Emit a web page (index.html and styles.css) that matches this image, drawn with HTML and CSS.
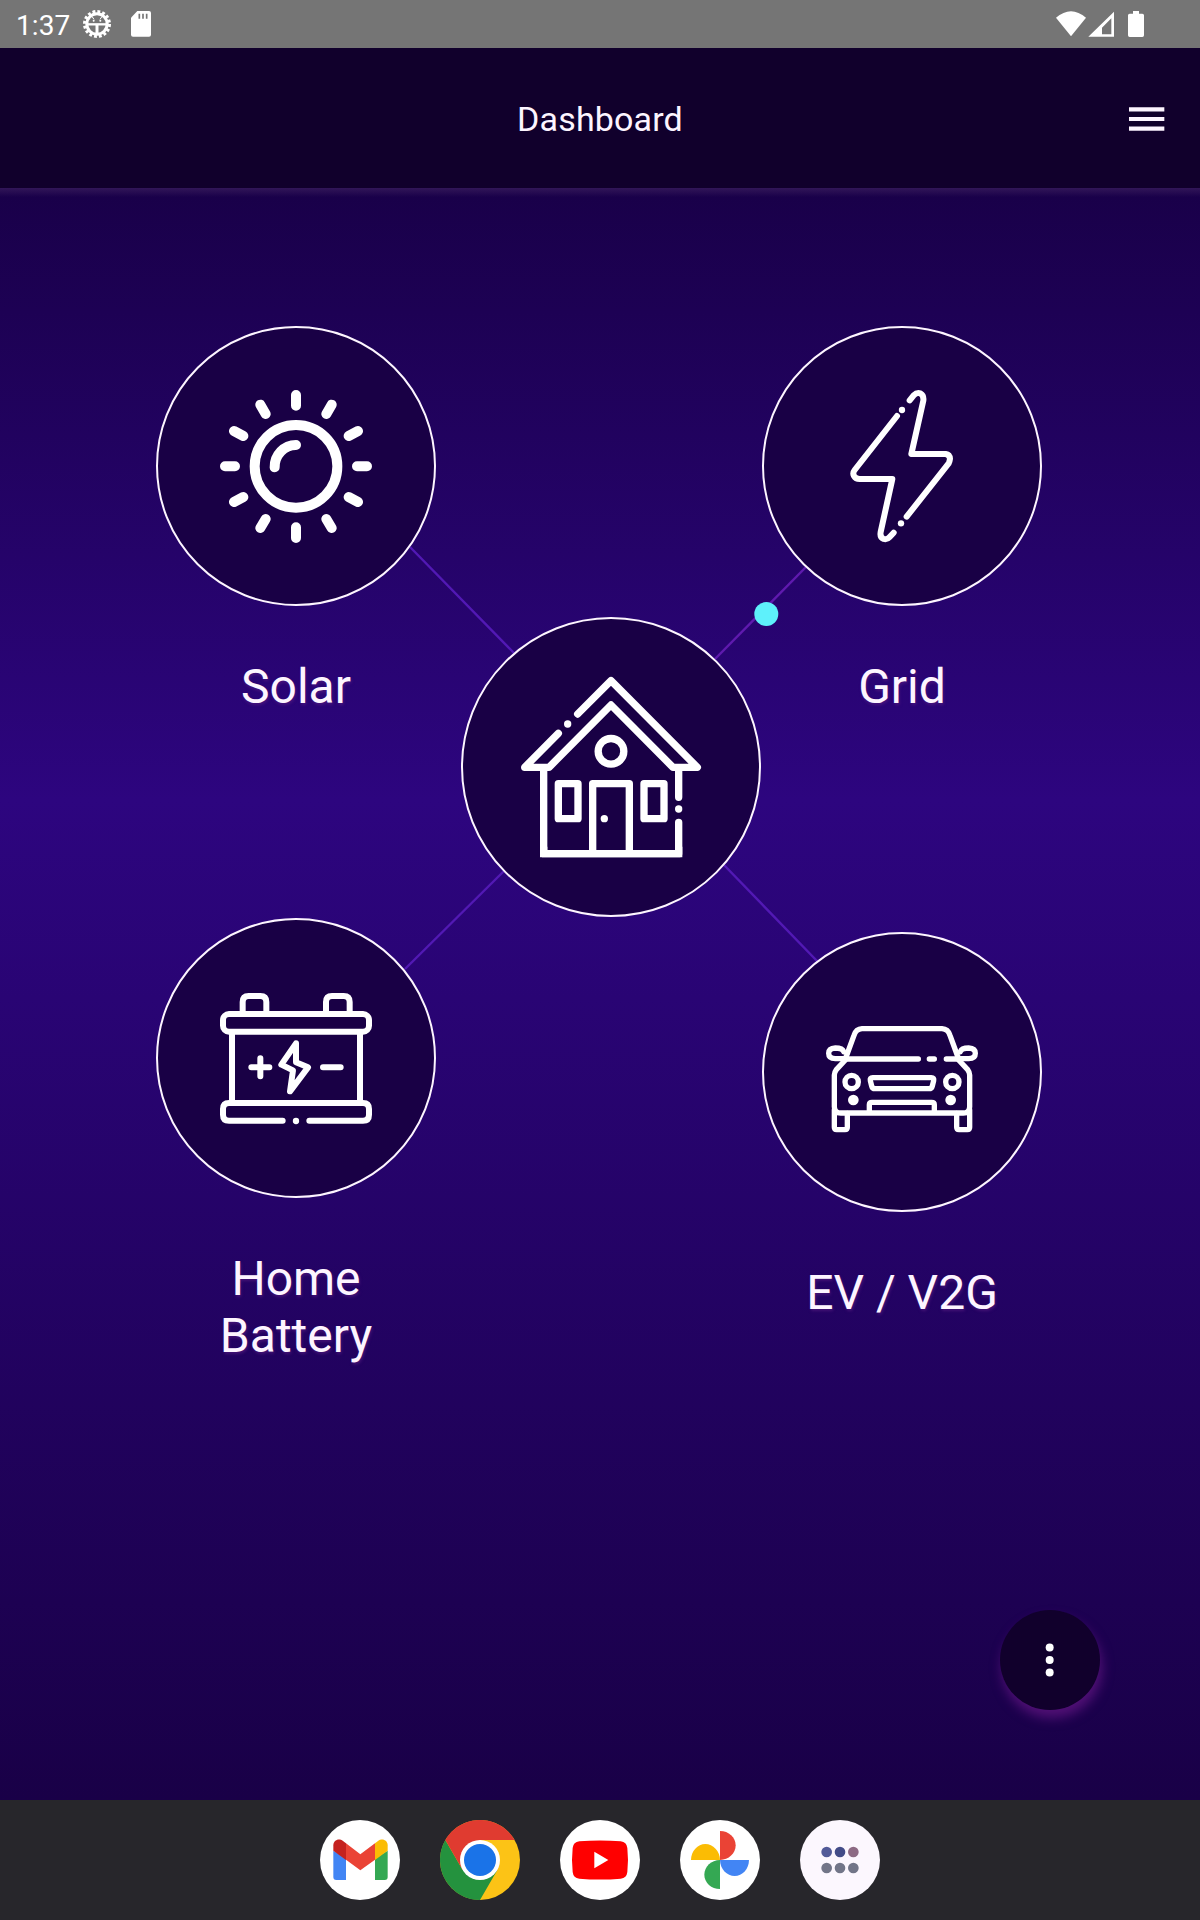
FILE: index.html
```html
<!DOCTYPE html>
<html lang="en">
<head>
<meta charset="utf-8">
<title>Dashboard</title>
<link rel="stylesheet" href="styles.css">
</head>
<body>
<div class="screen">

<div class="statusbar">
  <span class="time">1:37</span>
  <svg class="st-gear" viewBox="249 29 84 84">
    <circle cx="291" cy="71" r="37" fill="none" stroke="#fff" stroke-width="10" stroke-dasharray="8.500 6.030"/>
    <circle cx="291" cy="71" r="30.500" fill="none" stroke="#fff" stroke-width="9"/>
    <path d="M262 72H320" stroke="#fff" stroke-width="7"/>
    <path d="M291 72V102" stroke="#fff" stroke-width="9"/>
    <path d="M277 50l5 7M305 50l-5 7" stroke="#fff" stroke-width="3"/>
    <circle cx="281" cy="61" r="3" fill="#fff"/><circle cx="301" cy="61" r="3" fill="#fff"/>
  </svg>
  <svg class="st-sd" viewBox="393 33 60 78">
    <path d="M412 33H447Q453 33 453 39V104Q453 110 447 110H399Q393 110 393 104V53Z" fill="#fff"/>
    <path d="M418 41V56M429 41V56M440 41V56" stroke="#757575" stroke-width="5"/>
  </svg>
  <span class="spacer"></span>
  <svg class="st-wifi" viewBox="168 33 90 78"><path d="M168 53Q213 14 258 53L213 109Z" fill="#fff"/></svg>
  <svg class="st-cell" viewBox="264 33 78 78"><path fill-rule="evenodd" d="M342 35V110.500H265ZM334 55L306 83V103H334Z" fill="#fff"/></svg>
  <svg class="st-batt" viewBox="384 33 48 78"><path d="M399 33H417V41H427Q432 41 432 46V106Q432 111 427 111H389Q384 111 384 106V46Q384 41 389 41H399Z" fill="#fff"/></svg>
</div>

<div class="header">
  <h1>Dashboard</h1>
  <svg class="menu" viewBox="388 320 108 72"><path d="M388 327H494M388 356H494M388 385H494" stroke="#fdf5ff" stroke-width="12.500"/></svg>
</div>

<div class="stage">
  <svg class="links" viewBox="0 188 1200 1612">
    <path d="M410 547L514 653M818 962L724 865"/>
    <path d="M405 969L504 871"/>
    <path class="grid-link" d="M806 567L715 659"/>
    <circle cx="766.300" cy="614" r="12"/>
  </svg>

  <div class="node solar">
    <svg viewBox="18 18 840 840">
      <circle class="ring" cx="438" cy="438" r="417"/>
      <g class="ico w30">
        <circle cx="438" cy="439" r="124"/>
        <path d="M374 442A64 66 0 0 1 438 375"/>
        <path d="M438 225V257M438 622V654M225 439H255M621 439H651"/>
        <path d="M331 254L347 282M252 333L280 348M545 254L529 282M624 333L596 348"/>
        <path d="M331 624L347 597M252 546L280 531M545 624L529 597M624 546L596 531"/>
      </g>
    </svg>
    <p>Solar</p>
  </div>

  <div class="node grid">
    <svg viewBox="36 18 840 840">
      <circle class="ring" cx="456" cy="438" r="417"/>
      <g class="ico w18">
        <path d="M479 241L491 226Q500 217 511 220Q522 226 520 242L484 402H587Q599 404 600 416Q599 425 596 430L470 590"/>
        <path d="M441 288L314 450Q307 459 312 468Q317 477 329 477H427L392 636Q389 652 401 657Q411 660 419 651L431 638"/>
      </g>
      <circle class="dot" cx="456" cy="270" r="9.500"/>
      <circle class="dot" cx="453" cy="610" r="9.500"/>
    </svg>
    <p>Grid</p>
  </div>

  <div class="node home">
    <svg viewBox="33 51 900 900">
      <circle class="ring" cx="483" cy="501" r="447"/>
      <g class="ico w22">
        <path d="M383 342L483 242L742 502H669L483 315L297 502H224L325 400"/>
        <path d="M281 504V761H686V667M686 504V592"/>
        <circle cx="483" cy="454" r="38.500"/>
        <rect x="325" y="551" width="59" height="105"/>
        <rect x="582" y="551" width="60" height="105"/>
        <path d="M428 760V551H538V760"/>
      </g>
      <path class="ico w22 square" d="M281 740V761H686V740"/>
      <circle class="dot" cx="353" cy="372" r="11"/>
      <circle class="dot" cx="686" cy="627" r="11"/>
      <circle class="dot" cx="463" cy="656" r="11"/>
    </svg>
  </div>

  <div class="node battery">
    <svg viewBox="18 24 840 840">
      <circle class="ring" cx="438" cy="444" r="417"/>
      <g class="ico w18">
        <rect x="219" y="312" width="438" height="53" rx="18"/>
        <path d="M278 310V276Q278 258 296 258H331Q349 258 349 276V310M528 310V276Q528 258 546 258H581Q599 258 599 276V310"/>
        <path d="M246 366V578M630 366V578"/>
        <path d="M398 632H237Q219 632 219 614V597Q219 579 237 579H639Q657 579 657 597V614Q657 632 639 632H478"/>
        <path d="M304 472H358M331 445V499M519 472H572"/>
        <path d="M438 400L394 464L429 481L420 544L474 472L438 457Z"/>
      </g>
      <circle class="dot" cx="438" cy="633" r="9.500"/>
    </svg>
    <p>Home Battery</p>
  </div>

  <div class="node ev">
    <svg viewBox="36 36 840 840">
      <circle class="ring" cx="456" cy="456" r="417"/>
      <g class="ico w16">
        <path d="M286 417L312 346Q318 327 336 326H576Q594 327 600 346L626 417"/>
        <path d="M286 417H505M538 417H553M589 417H626"/>
        <path d="M286 420L259 449Q253 457 253 465V560Q253 579 272 579H640Q659 579 659 560V465Q659 457 653 449L626 420"/>
        <path d="M253 570V622Q253 629 260 629H285Q292 629 292 622V580M659 570V622Q659 629 652 629H627Q620 629 620 622V580"/>
        <path d="M281 395Q277 384 256 384Q236 385 236 400Q236 416 256 416H284M631 395Q635 384 656 384Q676 385 676 400Q676 416 656 416H628"/>
        <circle cx="305" cy="486" r="20"/>
        <circle cx="607" cy="486" r="20"/>
        <path d="M368 473H544Q553 473 551 482L547 498Q545 506 537 506H375Q367 506 365 498L361 482Q359 473 368 473Z"/>
        <path d="M358 577V554Q358 547 366 547H545Q553 547 553 554V577"/>
      </g>
      <circle class="dot" cx="310" cy="540" r="16"/>
      <circle class="dot" cx="602" cy="540" r="16"/>
    </svg>
    <p>EV / V2G</p>
  </div>

  <div class="fab">
    <svg viewBox="120 90 300 300">
      <circle class="dot" cx="269" cy="202.500" r="12"/>
      <circle class="dot" cx="269" cy="240" r="12"/>
      <circle class="dot" cx="269" cy="277.500" r="12"/>
    </svg>
  </div>
</div>

<div class="dock">
  <svg class="app" viewBox="60 90 240 240">
    <circle cx="180" cy="210" r="120" fill="#fff"/>
    <path d="M100 182L138 205V270H109Q100 270 100 261Z" fill="#4285f4"/>
    <path d="M225 205L263 182V261Q263 270 254 270H225Z" fill="#34a853"/>
    <path d="M138 160L181 193L225 160V209L181 241L138 209Z" fill="#ea4335"/>
    <path d="M225 160L234 153C247 143 263 151 263 166V182L225 210Z" fill="#fbbc04"/>
    <path d="M138 160L129 153C116 143 100 151 100 166V182L138 210Z" fill="#c5221f"/>
  </svg>
  <svg class="app" viewBox="420 90 240 240">
    <circle cx="540" cy="210" r="120" fill="#fcc316"/>
    <path d="M436 150A120 120 0 0 0 540 330L592 240L488 240Z" fill="#24923e"/>
    <path d="M436 150A120 120 0 0 1 644 150H540L488 240Z" fill="#e03b30"/>
    <circle cx="540" cy="210" r="60" fill="#fff"/>
    <circle cx="540" cy="210" r="48" fill="#1a73e8"/>
  </svg>
  <svg class="app" viewBox="-120 90 240 240">
    <circle cx="0" cy="210" r="120" fill="#fff"/>
    <path d="M-62 154Q0 149 62 154Q80 156 82 174Q86 210 82 246Q80 264 62 266Q0 271 -62 266Q-80 264 -82 246Q-86 210 -82 174Q-80 156 -62 154Z" fill="#f00"/>
    <path d="M-17 185L25 210L-17 235Z" fill="#fff"/>
  </svg>
  <svg class="app" viewBox="240 90 240 240">
    <circle cx="360" cy="210" r="120" fill="#fff"/>
    <path d="M360 123C386 123 407 142 407 166S386 210 360 210Z" fill="#ea4335"/>
    <path d="M447 210C447 237 427 258 404 258S360 237 360 210Z" fill="#4285f4"/>
    <path d="M360 297C334 297 313 278 313 254S334 210 360 210Z" fill="#34a853"/>
    <path d="M273 210C273 183 293 162 316 162S360 183 360 210Z" fill="#fbbc04"/>
  </svg>
  <svg class="app" viewBox="600 90 240 240">
    <circle cx="720" cy="210" r="120" fill="#fcf7fe"/>
    <circle cx="680" cy="186" r="16" fill="#525a98"/>
    <circle cx="720" cy="186" r="16" fill="#434c88"/>
    <circle cx="760" cy="186" r="16" fill="#8d6a84"/>
    <circle cx="680" cy="234" r="16" fill="#727588"/>
    <circle cx="720" cy="234" r="16" fill="#727588"/>
    <circle cx="760" cy="234" r="16" fill="#727588"/>
  </svg>
</div>

</div>
</body>
</html>
```

FILE: styles.css
```css
body { margin: 0; font-family: Roboto, "Liberation Sans", sans-serif; color: #fdf5ff; }
svg { display: block; flex: none; }
h1, p { margin: 0; font-weight: 400; }

.screen { width: 1200px; height: 1920px; display: flex; flex-direction: column; overflow: hidden; }

/* status bar */
.statusbar { height: 48px; box-sizing: border-box; padding: 0 56px 0 16px; display: flex; align-items: center; background: #757575; color: #fff; }
.time { font-size: 28px; line-height: 46px; padding-top: 3px; width: 67px; letter-spacing: .1px; }
.spacer { flex: 1; }
.st-gear { width: 28px; height: 28px; }
.st-sd { width: 20px; height: 26px; margin-left: 20px; }
.st-wifi { width: 30px; height: 26px; }
.st-cell { width: 26px; height: 26px; margin-left: 2px; }
.st-batt { width: 16px; height: 26px; margin-left: 14px; }

/* header */
.header { height: 140px; box-sizing: border-box; padding: 0 35px; display: grid; grid-template-columns: 36px 1fr 36px; align-items: center; background: #11002c; }
.header h1 { grid-column: 2; text-align: center; font-size: 34px; line-height: 40px; padding-top: 2px; letter-spacing: .15px; }
.menu { width: 36px; height: 24px; padding-top: 2px; }

/* energy diagram */
.stage { flex: 1; position: relative; background: linear-gradient(rgba(70, 40, 100, .55), rgba(70, 40, 100, 0) 9px), linear-gradient(#190049, #2d057f 38%, #190047); }
.links { width: 1200px; height: 1612px; }
.links path { fill: none; stroke: #5219b4; stroke-width: 2.4; }
.links .grid-link { stroke: #5f1aae; }
.links circle { fill: #5ef1fb; }

.node { position: absolute; width: 280px; text-align: center; }
.node svg { width: 100%; }
.node p { width: 200px; margin: 53px auto 0; font-size: 48px; line-height: 56.5px; text-shadow: 1px 2px 3px rgba(90, 30, 130, .6); }
.solar { left: 156px; top: 138px; }
.grid { left: 762px; top: 138px; }
.home { left: 461px; top: 429px; width: 300px; }
.battery { left: 156px; top: 730px; }
.ev { left: 762px; top: 744px; }

.ring { fill: #190045; stroke: #fdf5ff; stroke-width: 6; }
.ico { fill: none; stroke: #fff; stroke-linecap: round; stroke-linejoin: round; }
.w30 { stroke-width: 30; }
.w22 { stroke-width: 22; }
.w18 { stroke-width: 18; }
.w16 { stroke-width: 16; }
.square { stroke-linejoin: miter; stroke-linecap: butt; }
.dot { fill: #fff; }

.fab { position: absolute; right: 100px; bottom: 90px; width: 100px; height: 100px; border-radius: 50%; background: #11002c; box-shadow: 2px 8px 12px rgba(110, 25, 140, .65); }

/* dock */
.dock { height: 120px; display: flex; justify-content: center; align-items: center; gap: 40px; background: #27262b; }
.app { width: 80px; height: 80px; }
```
